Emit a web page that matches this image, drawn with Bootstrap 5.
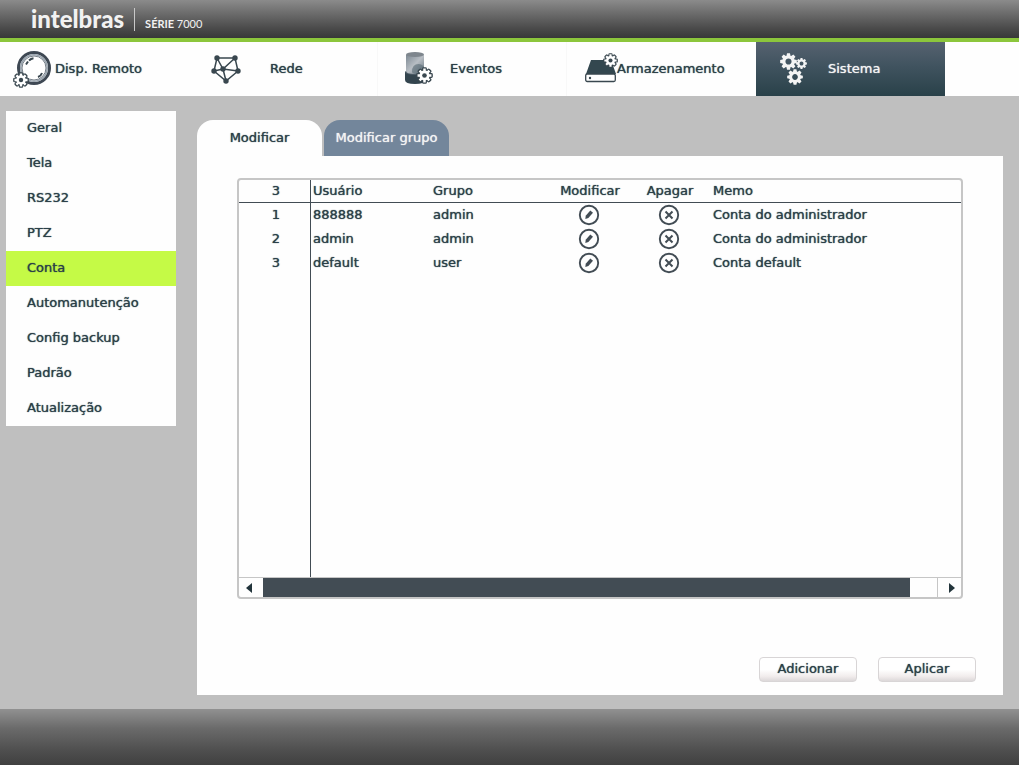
<!DOCTYPE html>
<html lang="pt-BR">
<head>
<meta charset="utf-8">
<meta name="viewport" content="width=device-width, initial-scale=1">
<title>Intelbras Série 7000 - Conta</title>
<link href="https://cdn.jsdelivr.net/npm/bootstrap@5.3.0/dist/css/bootstrap.min.css" rel="stylesheet">
<style>
  :root { --ink: #2b4048; --slate: #424c54; --edge: #c6c6c6; --paper: #fefefe; }
  body { font: 13px/24px "DejaVu Sans", Verdana, sans-serif; color: var(--ink); background: #bfbfbf; text-shadow: 0 0 1px currentColor; }
  a { text-decoration: none; }
  .brandbar { height: 42px; padding-left: 31px; border-bottom: 4px solid #8cc63c;
    background: linear-gradient(#8b8b8b, #6c6c6c 35%, #4a4a4a 75%, #383838); color: #f2f2f2; text-shadow: none; }
  .brandbar .logo { font: 900 24px/36px Lato, sans-serif; color: #f2f2f2; }
  .brandbar .rule { width: 1px; height: 23px; margin: 0 10px; background: #c8c8c8; }
  .brandbar .series { font: 700 11px/14px Lato, sans-serif; margin-top: 9px; }
  .brandbar .series span { font-weight: 400; }
  .mainnav { display: grid; grid-template-columns: repeat(5, 189fr) 74fr; height: 54px; background: var(--paper); }
  .mainnav a { color: var(--ink); text-shadow: 0 0 1px currentColor; }
  .mainnav a:nth-child(2), .mainnav a:nth-child(3) { border-right: 1px solid #f8f8f8; }
  .mainnav a.current { color: #f4f4f4; background: linear-gradient(#566270, #40535f 45%, #294149); }
  .mainnav svg { flex: none; overflow: visible; }
  .mainnav .network { margin: 0 29px 0 22px; }
  .mainnav .sensor { margin: 0 16px 0 26px; }
  .mainnav .disk { margin-left: 18px; }
  .mainnav .cogs { margin: 0 20px 0 24px; }
  .sidenav { width: 170px; margin: 15px 21px 0 6px; background: var(--paper); }
  .sidenav a { color: var(--ink); padding: 5px 0 6px 21px; text-shadow: 0 0 1px currentColor; }
  .sidenav a.current { background: #c5fa46; }
  .workspace { margin: 24px 16px 14px 0; min-width: 0; }
  button { text-shadow: 0 0 1px currentColor; }
  .tabrow { gap: 2px; }
  .tabrow button { width: 125px; height: 36px; border: 0; border-radius: 16px 16px 0 0; background: #73869b; color: #f4f4f4; padding: 0; }
  .tabrow button.current { background: var(--paper); color: var(--ink); }
  .sheet { background: var(--paper); padding: 22px 40px 13px; }
  .gridbox { border: 2px solid var(--edge); border-radius: 4px; min-height: 421px; }
  .gridbody { background: linear-gradient(var(--slate), var(--slate)) 71px 0 / 1px 100% no-repeat; }
  .gridbody table { width: 100%; table-layout: fixed; border-collapse: separate; border-spacing: 0; }
  .gridbody .c1 { width: 72px; }
  .gridbody .c2 { width: 120px; }
  .gridbody .c3 { width: 118px; }
  .gridbody .c4 { width: 80px; }
  .gridbody th { font-weight: 400; border-bottom: 1px solid var(--slate); line-height: 22px; }
  .gridbody th, .gridbody td { padding: 0 0 0 2px; height: 23px; white-space: nowrap; }
  .gridbody td { height: 24px; }
  .gridbody .memo { padding-left: 4px; }
  .gridbody .pick { padding: 0; }
  .gridbody button { width: 22px; height: 24px; border: 0; padding: 0; background: none; color: var(--slate); display: block; margin: auto; }
  .gridbody button svg { display: block; }
  .hscroll { height: 20px; border-top: 1px solid var(--edge); }
  .hscroll button { width: 24px; border: 0; padding: 0 5px 0 0; background: none; color: #22343b; line-height: 0; }
  .hscroll .next { border-left: 1px solid var(--edge); padding: 0 0 0 4px; }
  .hscroll .track { flex: 1; }
  .hscroll .thumb { width: 96%; height: 100%; background: var(--slate); }
  .actions { gap: 21px; margin: 58px -13px 0 0; }
  .actions button { width: 98px; height: 25px; padding: 0 0 1px; line-height: 20px; border: 1px solid #d8d5d6; border-radius: 4px; color: var(--ink);
    background: linear-gradient(#fff 50%, #f1ecec 80%, #dcd8d9); }
  .bottombar { height: 56px; background: linear-gradient(#919191, #6a6a6a 35%, #4e4e4e 75%, #404040); }
</style>
</head>
<body class="d-flex flex-column min-vh-100">

<svg width="0" height="0" class="position-absolute" aria-hidden="true">
  <symbol id="cog" viewBox="-10 -10 20 20">
    <g fill="currentColor">
      <g id="teeth"><path d="M-1.700-9.800h3.400l.9 4h-5.200z"/><path d="M-1.700 9.800h3.400l.9-4h-5.200z"/><path d="M-9.800-1.700v3.400l4 .9v-5.200z"/><path d="M9.800-1.700v3.400l-4 .9v-5.200z"/></g>
      <use href="#teeth" transform="rotate(45)"/>
    </g>
    <circle r="5.400" fill="none" stroke="currentColor" stroke-width="3.600"/>
  </symbol>
  <symbol id="cogline" viewBox="-11 -11 22 22">
    <g fill="#39474f" stroke="#39474f" stroke-width="3.600" stroke-linejoin="round">
      <g id="bars"><path d="M-1.300-9h2.600v18h-2.600zM-9-1.300v2.600h18v-2.600z"/></g>
      <use href="#bars" transform="rotate(45)"/>
      <circle r="6.500"/>
    </g>
    <g fill="#fff"><path d="M-1.600-9h3.200v18h-3.200zM-9-1.600v3.200h18v-3.200z"/><path transform="rotate(45)" d="M-1.600-9h3.200v18h-3.200zM-9-1.600v3.200h18v-3.200z"/><circle r="6.500"/></g>
    <circle r="3" fill="#39474f"/>
  </symbol>
  <symbol id="edit" viewBox="0 0 22 22">
    <circle cx="11" cy="11" r="9.200" fill="none" stroke="currentColor" stroke-width="1.900"/>
    <path d="M7.300 15l.4-3.200 4.600-5.300 2.700 2.300-4.600 5.300z" fill="currentColor"/>
  </symbol>
  <symbol id="remove" viewBox="0 0 22 22">
    <g fill="none" stroke="currentColor"><circle cx="11" cy="11" r="9.200" stroke-width="1.900"/><path d="M7.500 7.500l7 7M14.500 7.500l-7 7" stroke-width="2"/></g>
  </symbol>
  <linearGradient id="can" x2="1" y2="1"><stop stop-color="#7d8993"/><stop offset=".5" stop-color="#b8bec4"/><stop offset="1" stop-color="#66747f"/></linearGradient>
</svg>

<header class="brandbar d-flex align-items-center">
  <a class="logo" href="#">intelbras</a>
  <span class="rule"></span>
  <span class="series">SÉRIE <span>7000</span></span>
</header>

<nav class="mainnav" aria-label="Principal">
  <a href="#" class="d-flex align-items-center">
    <svg class="ms-2" width="47" height="44" viewBox="0 0 47 44">
      <circle cx="26" cy="21" r="15.500" fill="#fff" stroke="#3e4853" stroke-width="3"/>
      <circle cx="26" cy="21" r="13.200" fill="none" stroke="#9aa5af" stroke-width="1.600"/>
      <circle cx="26" cy="21" r="12" fill="none" stroke="#56616c" stroke-width=".8"/>
      <path d="M18 17.500l2-3M21 13.500q2-2 4.500-2.300" fill="none" stroke="#39474f" stroke-width="2"/>
      <path d="M30 30q3-1 4-4" fill="none" stroke="#39474f" stroke-width="2"/>
      <use href="#cogline" x="5" y="25" width="16" height="16"/>
    </svg>Disp. Remoto</a>
  <a href="#" class="d-flex align-items-center">
    <svg class="network" width="30" height="30" viewBox="0 0 30 30">
      <path d="M6 4h18l3 13-12 10L3 17zM6 4l6 11L24 4M3 17l9-2 15 2M12 15l3 12" fill="none" stroke="#39474f" stroke-width="1.500"/>
      <g fill="#39474f"><circle cx="6" cy="4" r="2.700"/><circle cx="24" cy="4" r="2.700"/><circle cx="27" cy="17" r="2.700"/><circle cx="15" cy="27" r="2.700"/><circle cx="3" cy="17" r="2.700"/><circle cx="12" cy="15" r="2.700"/></g>
    </svg>Rede</a>
  <a href="#" class="d-flex align-items-center">
    <svg class="sensor" width="30" height="34" viewBox="0 0 30 34">
      <path d="M1 20v8q0 4 10 4t10-4v-8z" fill="#33444e"/><ellipse cx="11" cy="20" rx="10" ry="3" fill="#4d5c67"/>
      <path d="M2 3v16q0 3 9 3t9-3V3z" fill="url(#can)"/>
      <path d="M8 20q0-8 6.500-8 3.500 0 5.500 3v4q-3 3-7 3-4 0-5-2z" fill="#596a75" opacity=".6"/>
      <ellipse cx="11" cy="2.500" rx="9" ry="2.500" fill="#7e868d"/>
      <use href="#cogline" x="12" y="15" width="17" height="17"/>
    </svg>Eventos</a>
  <a href="#" class="d-flex align-items-center">
    <svg class="disk" width="32" height="30" viewBox="0 0 32 30">
      <path d="M1 20L6 6h20l5 14z" fill="#33474f"/>
      <rect x=".7" y="20" width="29.600" height="7.500" rx="1.500" fill="#fff" stroke="#39474f" stroke-width="1.300"/>
      <circle cx="5" cy="24" r="1.200" fill="#39474f"/>
      <use href="#cogline" x="18" y="-1" width="15" height="15"/>
    </svg>Armazenamento</a>
  <a href="#" class="current d-flex align-items-center" aria-current="page">
    <svg class="cogs" width="28" height="32" viewBox="0 0 28 32">
      <use href="#cog" x="0" y="0" width="17" height="17"/>
      <use href="#cog" x="16" y="5" width="11" height="11"/>
      <use href="#cog" x="7" y="16" width="16" height="16"/>
    </svg>Sistema</a>
</nav>

<div class="d-flex flex-grow-1">
  <nav class="sidenav flex-shrink-0 align-self-start d-flex flex-column" aria-label="Sistema">
    <a href="#">Geral</a>
    <a href="#">Tela</a>
    <a href="#">RS232</a>
    <a href="#">PTZ</a>
    <a href="#" class="current" aria-current="page">Conta</a>
    <a href="#">Automanutenção</a>
    <a href="#">Config backup</a>
    <a href="#">Padrão</a>
    <a href="#">Atualização</a>
  </nav>

  <main class="workspace flex-grow-1 d-flex flex-column">
    <div class="tabrow d-flex" role="tablist">
      <button type="button" role="tab" class="current" aria-selected="true">Modificar</button>
      <button type="button" role="tab" aria-selected="false">Modificar grupo</button>
    </div>
    <section class="sheet flex-grow-1 d-flex flex-column">
      <div class="gridbox d-flex flex-column">
        <div class="gridbody flex-grow-1">
          <table>
            <colgroup><col class="c1"><col class="c2"><col class="c3"><col class="c4"><col class="c4"><col></colgroup>
            <thead>
              <tr><th class="text-center">3</th><th>Usuário</th><th>Grupo</th><th class="text-center">Modificar</th><th class="text-center">Apagar</th><th class="memo">Memo</th></tr>
            </thead>
            <tbody>
              <tr><td class="text-center">1</td><td>888888</td><td>admin</td>
                <td class="pick"><button type="button" aria-label="Modificar 888888"><svg width="22" height="22"><use href="#edit"/></svg></button></td>
                <td class="pick"><button type="button" aria-label="Apagar 888888"><svg width="22" height="22"><use href="#remove"/></svg></button></td>
                <td class="memo">Conta do administrador</td></tr>
              <tr><td class="text-center">2</td><td>admin</td><td>admin</td>
                <td class="pick"><button type="button" aria-label="Modificar admin"><svg width="22" height="22"><use href="#edit"/></svg></button></td>
                <td class="pick"><button type="button" aria-label="Apagar admin"><svg width="22" height="22"><use href="#remove"/></svg></button></td>
                <td class="memo">Conta do administrador</td></tr>
              <tr><td class="text-center">3</td><td>default</td><td>user</td>
                <td class="pick"><button type="button" aria-label="Modificar default"><svg width="22" height="22"><use href="#edit"/></svg></button></td>
                <td class="pick"><button type="button" aria-label="Apagar default"><svg width="22" height="22"><use href="#remove"/></svg></button></td>
                <td class="memo">Conta default</td></tr>
            </tbody>
          </table>
        </div>
        <div class="hscroll d-flex">
          <button type="button" aria-label="Rolar à esquerda"><svg width="6" height="10"><path d="M6 0v10L0 5z" fill="currentColor"/></svg></button>
          <div class="track"><div class="thumb"></div></div>
          <button type="button" class="next" aria-label="Rolar à direita"><svg width="6" height="10"><path d="M0 0v10l6-5z" fill="currentColor"/></svg></button>
        </div>
      </div>
      <div class="actions d-flex justify-content-end">
        <button type="button">Adicionar</button>
        <button type="button">Aplicar</button>
      </div>
    </section>
  </main>
</div>

<footer class="bottombar"></footer>
<script src="https://cdn.jsdelivr.net/npm/bootstrap@5.3.0/dist/js/bootstrap.bundle.min.js"></script>
</body>
</html>
